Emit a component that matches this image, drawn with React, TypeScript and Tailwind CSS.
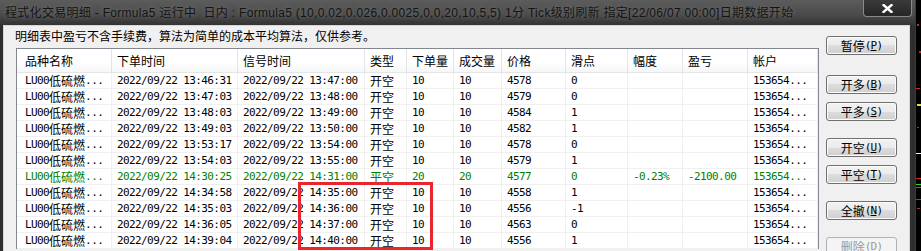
import React from "react";

type Row = {
  order: string;
  signal: string;
  kind: string;
  qty: string;
  filled: string;
  price: string;
  slip: string;
  range?: string;
  pnl?: string;
  green?: boolean;
};

const rows: Row[] = [
  { order: "13:46:31", signal: "13:47:00", kind: "开空", qty: "10", filled: "10", price: "4578", slip: "0" },
  { order: "13:47:03", signal: "13:48:00", kind: "开空", qty: "10", filled: "10", price: "4579", slip: "0" },
  { order: "13:48:03", signal: "13:49:00", kind: "开空", qty: "10", filled: "10", price: "4584", slip: "1" },
  { order: "13:49:03", signal: "13:50:00", kind: "开空", qty: "10", filled: "10", price: "4582", slip: "1" },
  { order: "13:53:17", signal: "13:54:00", kind: "开空", qty: "10", filled: "10", price: "4578", slip: "0" },
  { order: "13:54:03", signal: "13:55:00", kind: "开空", qty: "10", filled: "10", price: "4579", slip: "1" },
  { order: "14:30:25", signal: "14:31:00", kind: "平空", qty: "20", filled: "20", price: "4577", slip: "0", range: "-0.23%", pnl: "-2100.00", green: true },
  { order: "14:34:58", signal: "14:35:00", kind: "开空", qty: "10", filled: "10", price: "4558", slip: "1" },
  { order: "14:35:03", signal: "14:36:00", kind: "开空", qty: "10", filled: "10", price: "4556", slip: "-1" },
  { order: "14:36:05", signal: "14:37:00", kind: "开空", qty: "10", filled: "10", price: "4563", slip: "0" },
  { order: "14:39:04", signal: "14:40:00", kind: "开空", qty: "10", filled: "10", price: "4556", slip: "1" },
];

const columns = [
  { title: "品种名称", cls: "w-[95px] pl-[8px]" },
  { title: "下单时间", cls: "w-[126px] pl-[5px]" },
  { title: "信号时间", cls: "w-[127px] pl-[5px]" },
  { title: "类型", cls: "w-[42px] pl-[5px]" },
  { title: "下单量", cls: "w-[47px] pl-[5px]" },
  { title: "成交量", cls: "w-[48px] pl-[5px]" },
  { title: "价格", cls: "w-[64px] pl-[5px]" },
  { title: "滑点", cls: "w-[62px] pl-[5px]" },
  { title: "幅度", cls: "w-[55px] pl-[5px]" },
  { title: "盈亏", cls: "w-[65px] pl-[5px]" },
  { title: "帐户", cls: "w-[70px] pl-[5px]" },
];

const cjk = "font-['Noto_Sans_CJK_SC',sans-serif] text-[12px] tracking-normal";

// mixed text: latin runs stay in the mono cell font, han runs get the cjk font
function mixed(s: string) {
  return s.split(/([\u4e00-\u9fff]+)/).map((part, i) =>
    /[\u4e00-\u9fff]/.test(part) ? (
      <span key={i} className={cjk}>
        {part}
      </span>
    ) : (
      part
    )
  );
}

function Btn({ label, hot, disabled }: { label: string; hot: string; disabled?: boolean }) {
  return (
    <div
      className={
        disabled
          ? "h-[19px] w-[71px] shrink-0 flex items-center justify-center rounded-[3px] border border-[#adb2b5] bg-[#f4f4f4] text-[#9a9a9a]"
          : "h-[19px] w-[71px] shrink-0 flex items-center justify-center rounded-[3px] border border-[#707070] bg-[linear-gradient(to_bottom,#f2f2f2_0%,#ebebeb_50%,#dddddd_50%,#cfcfcf_100%)] shadow-[inset_0_0_0_1px_#fbfbfb] text-black"
      }
    >
      <span className={cjk + " leading-[16px]"}>{label}</span>
      <span className="font-['DejaVu_Sans_Mono',monospace] text-[11px] tracking-[-0.8px] leading-[16px]">
        (<u>{hot}</u>)
      </span>
    </div>
  );
}

export default function App() {
  return (
    <div className="relative w-[921px] h-[251px] overflow-hidden bg-black flex">
      <div className="w-[915px] h-full shrink-0 flex flex-col bg-[#2e2e2e]">
        {/* title bar */}
        <div className="h-[25px] shrink-0 flex justify-between bg-[linear-gradient(to_bottom,#5c5c5c,#4a4a4a_60%,#333333)]">
          <div className="pl-[5px] flex items-center whitespace-pre font-['Liberation_Sans','Noto_Sans_CJK_SC',sans-serif] text-[12px] tracking-[0.3px] leading-[16px] text-[#141414] [text-shadow:0_0_5px_rgba(255,255,255,0.25)]">
            程式化交易明细 - Formula5 运行中  日内 : Formula5 (10,0.02,0.026,0.0025,0,0,20,10,5,5) 1分 Tick级别刷新 指定[22/06/07 00:00]日期数据开始
          </div>
          <div className="mr-[3px] h-[17px] w-[49px] flex items-center justify-center rounded-b-[4px] border border-t-0 border-[#8a8a8a] bg-[linear-gradient(to_bottom,#3a3a3a,#262626)]">
            <svg width="11" height="9" viewBox="0 0 11 9">
              <path d="M1.5 1 L9.5 8 M9.5 1 L1.5 8" stroke="#ffffff" strokeWidth="2.4" strokeLinecap="square" />
            </svg>
          </div>
        </div>

        {/* client */}
        <div className="flex-1 min-h-0 flex pl-[3px] pr-[5px]">
          <div className="flex-1 flex items-start bg-[#f0f0f0] border-l border-t border-r border-[#d6d6d6]">
            <div className="pl-[11px] shrink-0 flex flex-col">
              <div className={cjk + " h-[22px] shrink-0 pt-[1px] leading-[17px] text-black"}>
                明细表中盈亏不含手续费，算法为简单的成本平均算法，仅供参考。
              </div>
              <div className="ml-[1px] w-[803px] shrink-0 border border-b-0 border-[#828790] bg-white">
                {/* header */}
                <div className="h-[24px] flex border-b border-[#e5e5e5] bg-[linear-gradient(to_bottom,#ffffff,#ffffff_55%,#f5f6f7)]">
                  {columns.map((c) => (
                    <div
                      key={c.title}
                      className={c.cls + " shrink-0 flex items-center pt-[1px] border-r border-[#e3e4e6] text-[12px] leading-[16px] text-black font-['Noto_Sans_CJK_SC',sans-serif]"}
                    >
                      {c.title}
                    </div>
                  ))}
                </div>
                {/* rows */}
                {rows.map((r) => {
                  const vals = [
                    "LU00低硫燃...",
                    "2022/09/22 " + r.order,
                    "2022/09/22 " + r.signal,
                    r.kind,
                    r.qty,
                    r.filled,
                    r.price,
                    r.slip,
                    r.range ?? "",
                    r.pnl ?? "",
                    "153654...",
                  ];
                  return (
                    <div
                      key={r.order}
                      className={
                        "h-[16px] flex border-b border-[#f0f0f0] font-['DejaVu_Sans_Mono','Noto_Sans_CJK_SC',monospace] text-[11px] tracking-[-0.6px] leading-[16px] " +
                        (r.green ? "text-[#008000]" : "text-black")
                      }
                    >
                      {vals.map((v, i) => (
                        <div
                          key={i}
                          className={columns[i].cls + " shrink-0 flex items-center pt-[1px] whitespace-pre overflow-hidden border-r border-[#f0f0f0]"}
                        >
                          {mixed(v)}
                        </div>
                      ))}
                    </div>
                  );
                })}
              </div>
            </div>

            {/* buttons */}
            <div className="ml-[7px] pt-[10px] shrink-0 flex flex-col">
              <Btn label="暂停" hot="P" />
              <div className="mt-[20px]">
                <Btn label="开多" hot="B" />
              </div>
              <div className="mt-[8px]">
                <Btn label="平多" hot="S" />
              </div>
              <div className="mt-[17px]">
                <Btn label="开空" hot="U" />
              </div>
              <div className="mt-[8px]">
                <Btn label="平空" hot="T" />
              </div>
              <div className="mt-[17px]">
                <Btn label="全撤" hot="N" />
              </div>
              <div className="mt-[17px]">
                <Btn label="删除" hot="D" disabled />
              </div>
            </div>
          </div>
        </div>
      </div>

      {/* chart behind the window */}
      <div className="w-[6px] h-full shrink-0">
        <svg width="6" height="251" viewBox="0 0 6 251">
          <rect x="0" y="0" width="1" height="251" fill="#3a3a3a" />
          <rect x="2" y="24" width="2" height="2" fill="#e02020" />
          <rect x="4" y="51" width="2" height="2" fill="#e02020" />
          <rect x="1" y="88" width="4" height="1" fill="#e02020" />
          <rect x="2" y="104" width="4" height="2" fill="#e8e020" />
          <rect x="2" y="127" width="2" height="1" fill="#e02020" />
          <rect x="1" y="153" width="5" height="1" fill="#f0f0f0" />
          <rect x="1" y="178" width="5" height="1" fill="#e02020" />
          <rect x="1" y="184" width="5" height="1" fill="#20e020" />
          <rect x="1" y="187" width="5" height="1" fill="#d020d0" />
          <rect x="1" y="199" width="5" height="1" fill="#e02020" />
          <rect x="2" y="208" width="3" height="1" fill="#e02020" />
        </svg>
      </div>

      {/* red annotation box */}
      <div className="absolute left-[298px] top-[182px] w-[135px] h-[68px] border-[3px] border-[#e8262b] pointer-events-none" />
    </div>
  );
}
